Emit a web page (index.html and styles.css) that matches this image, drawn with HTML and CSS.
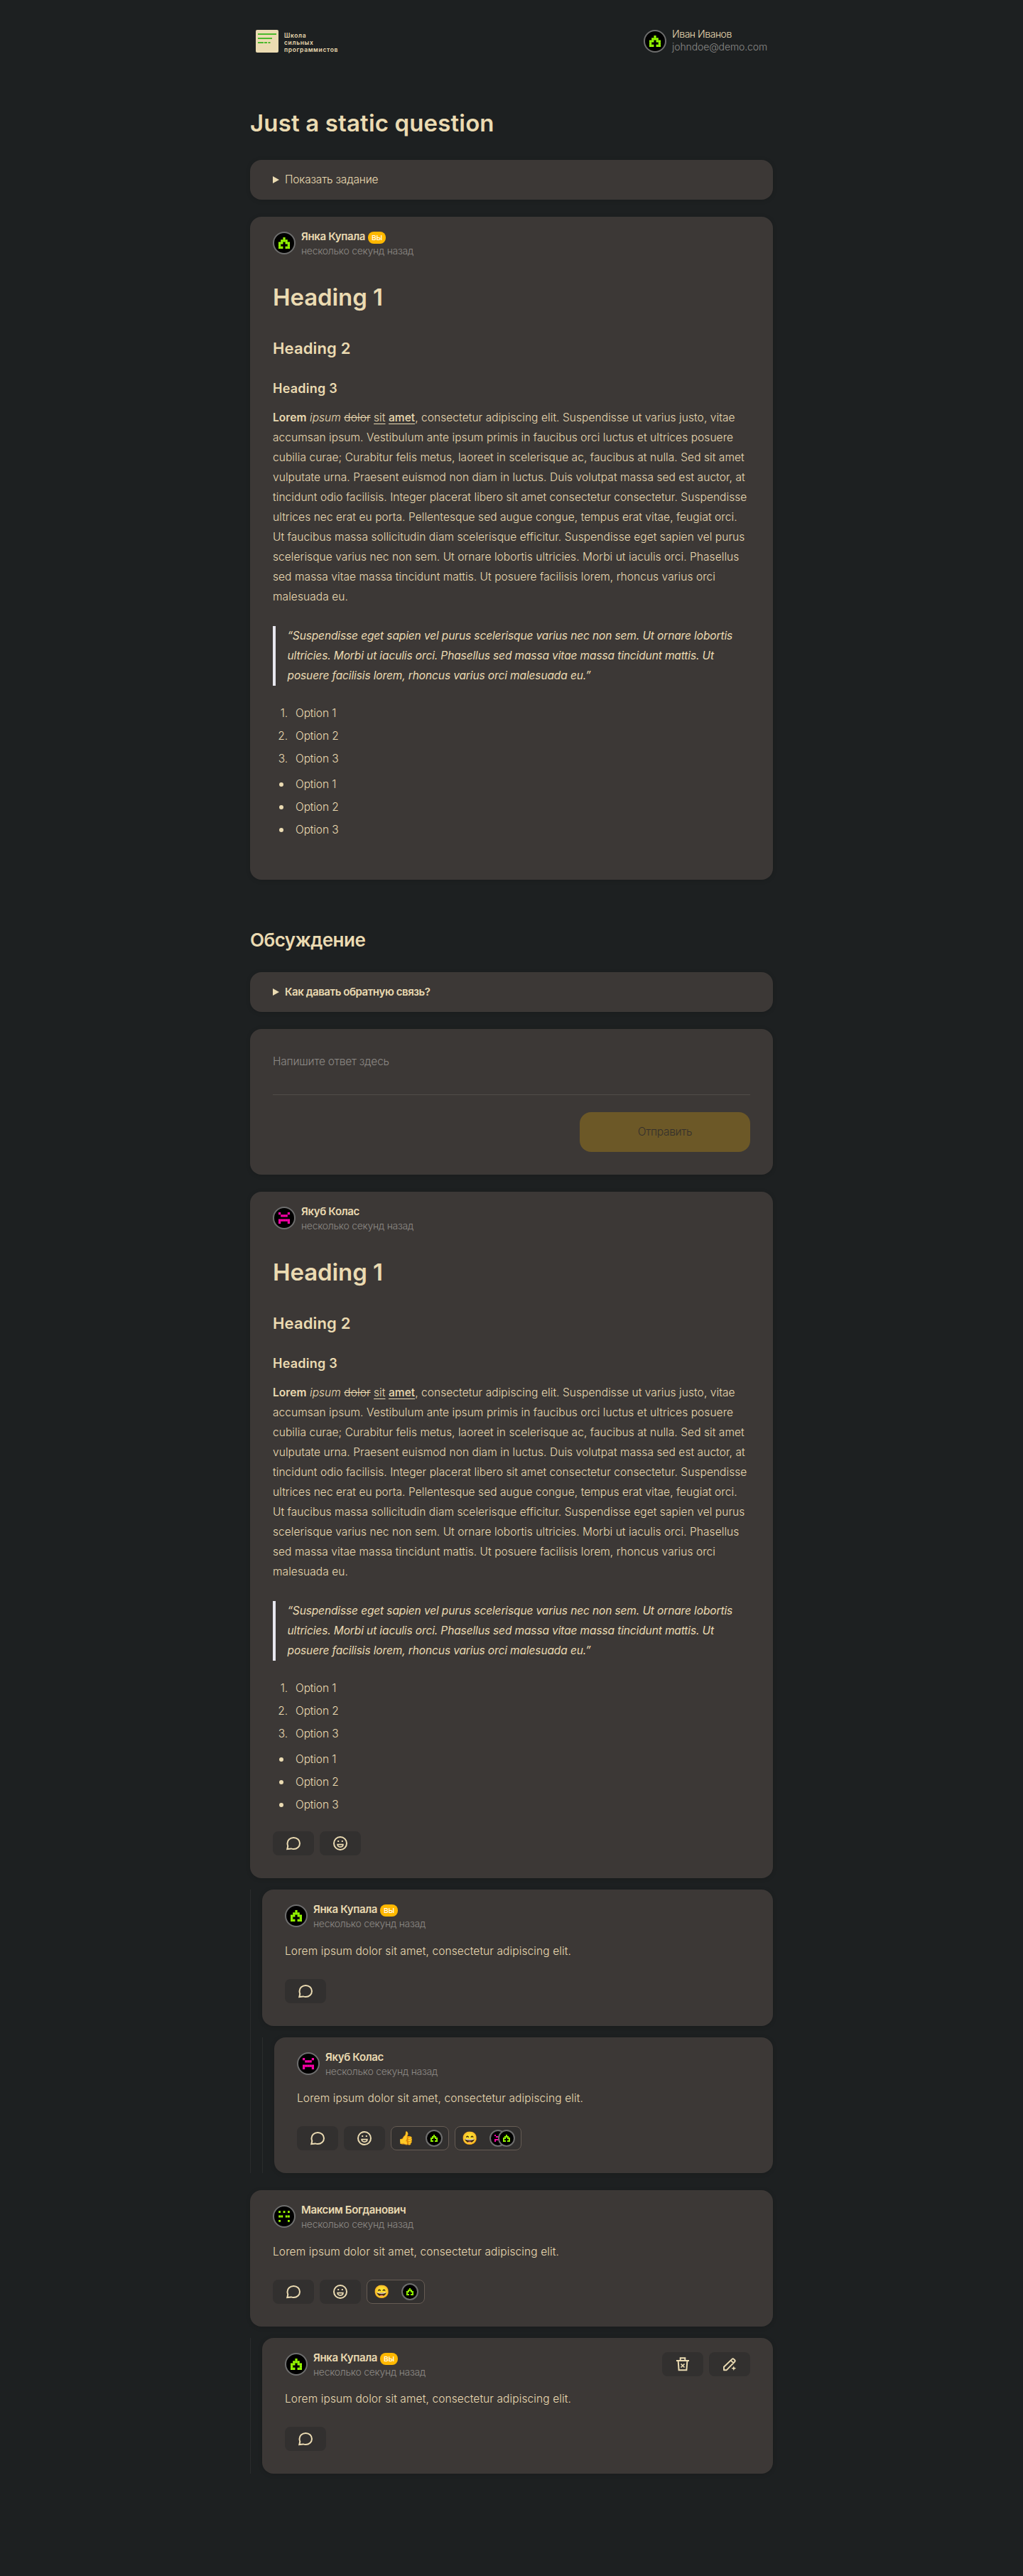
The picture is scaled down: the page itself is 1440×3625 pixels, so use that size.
FILE: index.html
```html
<!DOCTYPE html>
<html lang="ru"><head><meta charset="utf-8"><title>Just a static question</title><link rel="stylesheet" href="styles.css"></head>
<body>
<svg class="defs" width="0" height="0" aria-hidden="true">
<symbol id="house" viewBox="0 0 16 16"><path fill="#9f0" d="M6.4 0h3.2v3.2h3.2v3.2H16V16H9.6v-3.2h3.2V9.6H9.6V6.4H6.4v3.2H3.2v3.2h3.2V16H0V6.4h3.2V3.2h3.2z"/><path stroke="#4f8800" stroke-width=".3" d="M3.2 6.4V16M6.4 0V6.4M9.6 0V6.4M12.8 3.2V16M0 9.6H3.2M12.8 9.6H16M0 12.8H6.4M9.6 12.8H16M6.4 3.2H9.6M3.2 6.4H12.8"/></symbol>
<symbol id="bug" viewBox="0 0 16 16"><path fill="#ff00aa" d="M0 0h3.2v3.2H0zM12.8 0H16v3.2h-3.2zM3.2 3.2h9.6v3.2H3.2zM0 9.6h16V16h-3.2v-3.2H3.2V16H0z"/><path stroke="#90005f" stroke-width=".3" d="M6.4 3.2v3.2M9.6 3.2v3.2M3.2 9.6v3.2M6.4 9.6v3.2M9.6 9.6v3.2M12.8 9.6v3.2M0 12.8h3.2M12.8 12.8H16"/></symbol>
<symbol id="dots" viewBox="0 0 16 16"><path fill="#9f0" d="M.2.2H3V3H.2zM6.6.2h2.8V3H6.6zM13 .2h2.8V3H13zM.2 6.6H3v2.8H.2zM3.4 6.6h2.8v2.8H3.4zM9.8 6.6h2.8v2.8H9.8zM13 6.6h2.8v2.8H13zM.2 13H3v2.8H.2zM13 13h2.8v2.8H13z"/></symbol>
<symbol id="chat" viewBox="0 0 24 24"><path fill="none" stroke="currentColor" stroke-width="2" d="M3.300 20.100 4.300 15.800C3.800 14.700 3.500 13.400 3.500 12 3.500 7.400 7.400 4 12.300 4S21 7.400 21 12s-3.900 8-8.700 8c-1.200 0-2.400-.2-3.500-.6z"/></symbol>
<symbol id="smile" viewBox="0 0 24 24"><circle cx="12" cy="12" r="9" fill="none" stroke="currentColor" stroke-width="2"/><path fill="currentColor" d="M8.200 8h2v2h-2zM13.800 8h2v2h-2z"/><path fill="none" stroke="currentColor" stroke-width="1.700" d="M8.100 13.600h7.800c0 2.200-1.700 3.500-3.900 3.500s-3.900-1.300-3.900-3.500z"/></symbol>
<symbol id="trash" viewBox="0 0 24 24"><path fill="none" stroke="currentColor" stroke-width="2" d="M3 7h18M8.700 7V3.200h6.600V7M5.600 7l1 13.300h10.800l1-13.300"/><path stroke="currentColor" stroke-width="1.700" d="m9.500 11.500 5 5m0-5-5 5"/></symbol>
<symbol id="pencil" viewBox="0 0 24 24"><path fill="none" stroke="currentColor" stroke-width="1.900" stroke-linejoin="round" d="M4 20.200v-4.500L15.400 4.900c.8-.8 1.800-.8 2.500-.1l1.200 1.200c.8.8.7 1.800 0 2.500L7.800 20.200zM13.700 6.600l3.800 3.800"/><path fill="currentColor" d="m17.800 14.400 1 2.300 2.500 1-2.500 1-1 2.300-1-2.300-2.500-1 2.500-1z"/></symbol>
</svg>
<div class="page">
<header class="top">
<a class="logo"><svg width="32" height="32" viewBox="0 0 32 32"><rect width="32" height="32" rx="2" fill="#ebdbb2"/><path fill="none" stroke="#4cb92d" stroke-width="2" d="M3 6h26M3 12h20M3 18h8M12 18h4M17.500 18h3"/></svg><span class="logo-text">Школа<br>сильных<br>программистов</span></a>
<div class="me"><span class="avatar"><svg><use href="#house"/></svg></span><div><div class="me-name">Иван Иванов</div><div class="me-mail">johndoe@demo.com</div></div></div>
</header>
<h1 class="title">Just a static question</h1>
<section class="card fold"><i class="tri"></i><span>Показать задание</span></section>
<article class="card first">
<div class="author"><span class="avatar"><svg><use href="#house"/></svg></span><div><div class="name">Янка Купала<span class="you">вы</span></div><div class="time">несколько секунд назад</div></div></div>
<div class="rich">
<h1>Heading 1</h1><h2>Heading 2</h2><h3>Heading 3</h3>
<p><b>Lorem</b> <em>ipsum</em> <s>dolor</s> <u>sit</u> <u class="strong">amet</u>, consectetur adipiscing elit. Suspendisse ut varius justo, vitae<br>accumsan ipsum. Vestibulum ante ipsum primis in faucibus orci luctus et ultrices posuere<br>cubilia curae; Curabitur felis metus, laoreet in scelerisque ac, faucibus at nulla. Sed sit amet<br>vulputate urna. Praesent euismod non diam in luctus. Duis volutpat massa sed est auctor, at<br>tincidunt odio facilisis. Integer placerat libero sit amet consectetur consectetur. Suspendisse<br>ultrices nec erat eu porta. Pellentesque sed augue congue, tempus erat vitae, feugiat orci.<br>Ut faucibus massa sollicitudin diam scelerisque efficitur. Suspendisse eget sapien vel purus<br>scelerisque varius nec non sem. Ut ornare lobortis ultricies. Morbi ut iaculis orci. Phasellus<br>sed massa vitae massa tincidunt mattis. Ut posuere facilisis lorem, rhoncus varius orci<br>malesuada eu.</p>
<blockquote>“Suspendisse eget sapien vel purus scelerisque varius nec non sem. Ut ornare lobortis<br>ultricies. Morbi ut iaculis orci. Phasellus sed massa vitae massa tincidunt mattis. Ut<br>posuere facilisis lorem, rhoncus varius orci malesuada eu.”</blockquote>
<ol><li>Option 1</li><li>Option 2</li><li>Option 3</li></ol>
<ul><li>Option 1</li><li>Option 2</li><li>Option 3</li></ul>
</div>
</article>
<h2 class="subtitle">Обсуждение</h2>
<section class="card fold guide"><i class="tri"></i><span>Как давать обратную связь?</span></section>
<section class="card form"><div class="field">Напишите ответ здесь</div><button class="send">Отправить</button></section>
<article class="card long">
<div class="author"><span class="avatar"><svg><use href="#bug"/></svg></span><div><div class="name">Якуб Колас</div><div class="time">несколько секунд назад</div></div></div>
<div class="rich">
<h1>Heading 1</h1><h2>Heading 2</h2><h3>Heading 3</h3>
<p><b>Lorem</b> <em>ipsum</em> <s>dolor</s> <u>sit</u> <u class="strong">amet</u>, consectetur adipiscing elit. Suspendisse ut varius justo, vitae<br>accumsan ipsum. Vestibulum ante ipsum primis in faucibus orci luctus et ultrices posuere<br>cubilia curae; Curabitur felis metus, laoreet in scelerisque ac, faucibus at nulla. Sed sit amet<br>vulputate urna. Praesent euismod non diam in luctus. Duis volutpat massa sed est auctor, at<br>tincidunt odio facilisis. Integer placerat libero sit amet consectetur consectetur. Suspendisse<br>ultrices nec erat eu porta. Pellentesque sed augue congue, tempus erat vitae, feugiat orci.<br>Ut faucibus massa sollicitudin diam scelerisque efficitur. Suspendisse eget sapien vel purus<br>scelerisque varius nec non sem. Ut ornare lobortis ultricies. Morbi ut iaculis orci. Phasellus<br>sed massa vitae massa tincidunt mattis. Ut posuere facilisis lorem, rhoncus varius orci<br>malesuada eu.</p>
<blockquote>“Suspendisse eget sapien vel purus scelerisque varius nec non sem. Ut ornare lobortis<br>ultricies. Morbi ut iaculis orci. Phasellus sed massa vitae massa tincidunt mattis. Ut<br>posuere facilisis lorem, rhoncus varius orci malesuada eu.”</blockquote>
<ol><li>Option 1</li><li>Option 2</li><li>Option 3</li></ol>
<ul><li>Option 1</li><li>Option 2</li><li>Option 3</li></ul>
</div>
<div class="actions"><span class="btn"><svg><use href="#chat"/></svg></span><span class="btn"><svg><use href="#smile"/></svg></span></div>
</article>
<div class="thread">
<article class="card reply">
<div class="author"><span class="avatar"><svg><use href="#house"/></svg></span><div><div class="name">Янка Купала<span class="you">вы</span></div><div class="time">несколько секунд назад</div></div></div>
<p class="text">Lorem ipsum dolor sit amet, consectetur adipiscing elit.</p>
<div class="actions"><span class="btn"><svg><use href="#chat"/></svg></span></div>
</article>
<div class="thread">
<article class="card reply compact">
<div class="author"><span class="avatar"><svg><use href="#bug"/></svg></span><div><div class="name">Якуб Колас</div><div class="time">несколько секунд назад</div></div></div>
<p class="text">Lorem ipsum dolor sit amet, consectetur adipiscing elit.</p>
<div class="actions"><span class="btn"><svg><use href="#chat"/></svg></span><span class="btn"><svg><use href="#smile"/></svg></span><span class="pill"><span class="emoji">👍</span><span class="avatar mini"><svg><use href="#house"/></svg></span></span><span class="pill"><span class="emoji">😄</span><span class="avatar mini"><svg><use href="#bug"/></svg></span><span class="avatar mini over"><svg><use href="#house"/></svg></span></span></div>
</article>
</div>
</div>
<article class="card reply next">
<div class="author"><span class="avatar"><svg><use href="#dots"/></svg></span><div><div class="name">Максим Богданович</div><div class="time">несколько секунд назад</div></div></div>
<p class="text">Lorem ipsum dolor sit amet, consectetur adipiscing elit.</p>
<div class="actions"><span class="btn"><svg><use href="#chat"/></svg></span><span class="btn"><svg><use href="#smile"/></svg></span><span class="pill"><span class="emoji">😄</span><span class="avatar mini"><svg><use href="#house"/></svg></span></span></div>
</article>
<div class="thread">
<article class="card reply compact">
<div class="author"><span class="avatar"><svg><use href="#house"/></svg></span><div><div class="name">Янка Купала<span class="you">вы</span></div><div class="time">несколько секунд назад</div></div><div class="tools"><span class="btn"><svg><use href="#trash"/></svg></span><span class="btn"><svg><use href="#pencil"/></svg></span></div></div>
<p class="text">Lorem ipsum dolor sit amet, consectetur adipiscing elit.</p>
<div class="actions"><span class="btn"><svg><use href="#chat"/></svg></span></div>
</article>
</div>
</div>
</body></html>
```
FILE: styles.css
```css
*{box-sizing:border-box}
body{margin:0;background:#1d2021;color:#ebdbb2;font:300 15.5px/28px Inter,"Noto Sans",sans-serif;letter-spacing:.11px}
h1,h2,h3,p,ol,ul,blockquote{margin:0;padding:0}
.defs{display:block;height:0}
.page{width:736px;height:3625px;margin:0 auto}
.top{display:flex;justify-content:space-between;padding:42px 8px 0;height:150px}
.logo{display:flex;gap:8px;height:32px}
.logo-text{font-size:8.5px;line-height:10px;font-weight:600;padding-top:3px;letter-spacing:.65px}
.me{display:flex;gap:8px}
.me-name,.me-mail{font-size:14px;line-height:18px}
.me-name{margin-top:-3px;letter-spacing:-.45px}
.me-mail{color:#8c8b89;letter-spacing:-.12px}
.avatar{flex:none;display:flex;align-items:center;justify-content:center;width:32px;height:32px;border-radius:50%;background:#000;border:2px solid #6e6e6e}
.avatar svg{flex:none;width:16px;height:16px}
.title{font-size:33px;line-height:46px;font-weight:600;letter-spacing:.15px;height:75px;white-space:nowrap}
.card{background:#3c3836;border-radius:16px;padding:17px 32px 32px;margin-bottom:24px;box-shadow:0 1px 6px rgba(0,0,0,.15)}
.fold{display:flex;align-items:center;height:56px;padding:0 32px;letter-spacing:-.18px}
.guide{font-size:15px;font-weight:600;letter-spacing:-.45px}
.tri{width:0;height:0;border:solid transparent;border-width:5px 0 5px 9px;border-left-color:#ebdbb2;margin-right:8px}
.strong{font-weight:500}
.first{height:933px}
.long{height:966px}
.author{display:flex;gap:8px;height:41px}
.author .avatar{margin-top:4px}
.name{font-size:15px;font-weight:600;line-height:20px;letter-spacing:-.35px;padding-top:1px;height:21px;white-space:nowrap}
.you{display:inline-block;width:25px;height:17px;border-radius:8px;background:#ffb800;color:#fff;font-size:12px;font-weight:400;line-height:16px;text-align:center;margin-left:4px}
.time{font-size:14px;line-height:20px;letter-spacing:-.3px;color:#8c8985}
.rich{white-space:nowrap}
.rich h1{font-size:33px;line-height:46px;font-weight:600;letter-spacing:-.1px;margin-top:32px}
.rich h2{font-size:22px;line-height:30px;font-weight:600;letter-spacing:.15px;margin-top:33.6px}
.rich h3{font-size:18px;line-height:26px;font-weight:600;letter-spacing:.25px;margin-top:29px}
.rich p{margin-top:14.8px;letter-spacing:.07px}
.rich b{font-weight:600}
.rich u{text-underline-offset:3px}
blockquote{margin-top:26.2px;border-left:4px solid #e6e6ee;padding-left:16.5px;font-style:italic;font-weight:400;letter-spacing:-.12px}
ol,ul{display:flow-root;list-style:none}
ol{margin-top:25px;counter-reset:item}
ul{margin-top:4px}
li{display:flex;align-items:center;gap:11px;margin-bottom:4px;height:28px;letter-spacing:-.12px}
ol + ul{margin-top:4px}
ol li::before{counter-increment:item;content:counter(item) ".";width:21px;text-align:right}
ul li::before{content:"";width:6px;height:6px;border-radius:50%;background:#ebdbb2;margin:0 6px 0 9px}
.subtitle{font-size:26px;line-height:36px;font-weight:600;letter-spacing:-.5px;margin-top:67px;margin-bottom:27px}
.form{height:205px;display:flex;flex-direction:column;align-items:flex-end;padding:32px}
.field{width:100%;height:61px;border-bottom:1px solid #504c49;color:#8c8985;letter-spacing:-.2px}
.send{width:240px;height:56px;margin-top:24px;border:0;border-radius:16px;background:#6c5827;color:#34302c;font:inherit;letter-spacing:-.3px}
.actions,.tools{display:flex;gap:8px}
.actions{margin-top:19.5px}
.reply .actions{margin-top:25px}
.tools{margin:3px 0 0 auto}
.btn{display:flex;align-items:center;justify-content:center;width:58px;height:34px;border-radius:8px;background:#32302f}
.btn svg{width:24px;height:24px}
.thread{border-left:1px solid #2a2c2c;padding-left:16px;margin-top:-8px}
.thread .thread{margin-top:16px}
.thread .card{margin-bottom:0}
.reply{height:192px}
.reply .text{margin-top:15px;white-space:nowrap}
.compact{height:191px}
.compact .text{margin-top:14px}
.next{margin-top:24px}
.pill{display:flex;align-items:center;height:34px;border:1px solid #665c54;border-radius:8px;background:#32302f;padding:0 8px 0 9px}
.emoji{width:39px;font-size:18px;line-height:32px;letter-spacing:0}
.mini{width:24px;height:24px}
.mini svg{width:10px;height:10px}
.author .mini{margin:0}
.over{margin-left:-12px}
```
